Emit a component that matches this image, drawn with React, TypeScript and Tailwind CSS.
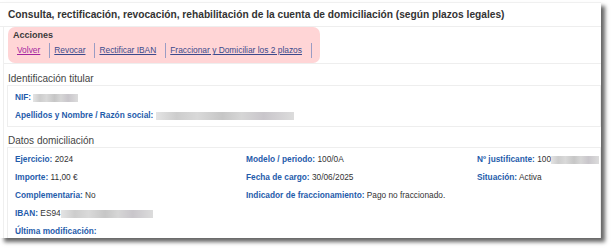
import React from 'react';

const font = { fontFamily: '"Liberation Sans", Arial, sans-serif' };

function Blur({ w }: { w: number }) {
  return (
    <span
      className="inline-block h-[8px] align-middle bg-[linear-gradient(90deg,#e4e4e4,#cdcdcd_15%,#d9d9d9_30%,#c6c6c6_48%,#d6d6d6_62%,#c9c6cb_78%,#dcdcdc)] blur-[0.6px]"
      style={{ width: w }}
    />
  );
}

function Field({ label, children }: { label: string; children?: React.ReactNode }) {
  return (
    <div className="leading-[18px] whitespace-nowrap">
      <span className="font-bold text-[#1f5cab]">{label}</span>{' '}
      <span className="text-[#333]">{children}</span>
    </div>
  );
}

const links = [
  { t: 'Volver', c: 'text-[#a4279e]' },
  { t: 'Revocar', c: 'text-[#3c4a8c]' },
  { t: 'Rectificar IBAN', c: 'text-[#3c4a8c]' },
  { t: 'Fraccionar y Domiciliar los 2 plazos', c: 'text-[#3c4a8c]' },
];

export default function App() {
  return (
    <div className="w-[612px] h-[250px] bg-white pt-[2px]" style={font}>
      <div className="w-[601px] h-[236px] bg-white border-t border-[#f0f0f0] shadow-[4px_4px_4px_rgba(0,0,0,0.6)] overflow-hidden">
        <div className="h-[24px] pl-[8px] border-b border-[#eeeeee] flex items-center">
          <h1 className="text-[10.2px] font-bold text-[#333]">
            Consulta, rectificación, revocación, rehabilitación de la cuenta de domiciliación (según plazos legales)
          </h1>
        </div>
        <div className="ml-[3px] border-l border-[#efefef] h-[211px]">
          <div className="border-b border-[#eeeeee] h-[37px] pl-[4px] flex items-start">
            <div className="flex flex-col h-[36px] bg-[#ffd5d6] rounded-[7px] pl-[5px] pr-[8px] pt-[3px]">
              <div className="text-[9px] font-bold text-[#3a3a3a] leading-[11px]">Acciones</div>
              <div className="flex items-center mt-[2px]">
                {links.map((l) => (
                  <span
                    key={l.t}
                    className="pl-[4px] pr-[9px] border-r border-[#9a9cc4] h-[15px] flex items-center"
                  >
                    <a className={`text-[8.4px] underline ${l.c}`}>{l.t}</a>
                  </span>
                ))}
              </div>
            </div>
          </div>

          <div className="pl-[4px] pt-[9px] text-[10px] leading-[12px] text-[#444]">Identificación titular</div>
          <div className="ml-[3px] border border-[#eeeeee] h-[42px] pl-[7px] pt-[2px] text-[8.3px]">
            <Field label="NIF:">
              <Blur w={45} />
            </Field>
            <Field label="Apellidos y Nombre / Razón social:">
              <Blur w={138} />
            </Field>
          </div>

          <div className="pl-[4px] pt-[8px] text-[10px] leading-[12px] text-[#444]">Datos domiciliación</div>
          <div className="ml-[3px] border border-[#eeeeee] h-[100px] pl-[7px] pt-[2px] text-[8.3px] grid grid-cols-[231px_231px_1fr] content-start">
            <Field label="Ejercicio:">2024</Field>
            <Field label="Modelo / periodo:">100/0A</Field>
            <Field label="Nº justificante:">
              100
              <Blur w={48} />
            </Field>
            <Field label="Importe:">11,00 €</Field>
            <Field label="Fecha de cargo:">30/06/2025</Field>
            <Field label="Situación:">Activa</Field>
            <Field label="Complementaria:">No</Field>
            <div className="col-span-2">
              <Field label="Indicador de fraccionamiento:">Pago no fraccionado.</Field>
            </div>
            <div className="col-span-3">
              <Field label="IBAN:">
                ES94
                <Blur w={92} />
              </Field>
            </div>
            <div className="col-span-3">
              <Field label="Última modificación:" />
            </div>
          </div>
        </div>
      </div>
    </div>
  );
}
